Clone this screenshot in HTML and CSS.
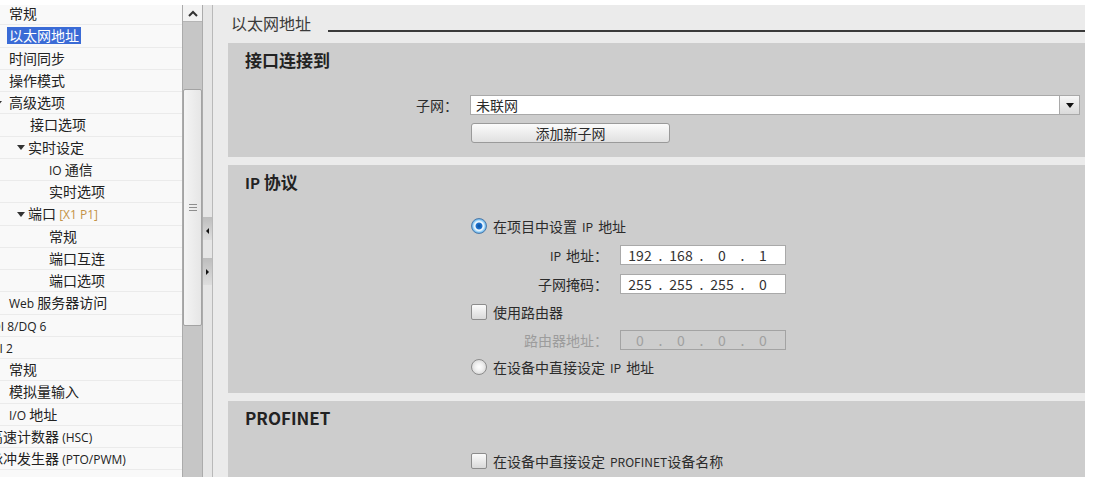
FILE: index.html
```html
<!DOCTYPE html>
<html>
    <head>
        <meta charset="utf-8">
        <link rel="stylesheet" href="styles.css">
    </head>
    <body>

        <div class="app">

            <div class="tree">
                <ul>
                    <li class="l0">常规</li>
                    <li class="l0"><span class="sel">以太网地址</span></li>
                    <li class="l0">时间同步</li>
                    <li class="l0">操作模式</li>
                    <li class="l0"><i class="toggle cut"></i>高级选项</li>
                    <li class="l1">接口选项</li>
                    <li class="l1t"><i class="toggle"></i>实时设定</li>
                    <li class="l2"><span class="lat">IO</span> 通信</li>
                    <li class="l2">实时选项</li>
                    <li class="l1t"><i class="toggle"></i>端口 <span class="lat port">[X1 P1]</span></li>
                    <li class="l2">常规</li>
                    <li class="l2">端口互连</li>
                    <li class="l2">端口选项</li>
                    <li class="l0"><span class="lat">Web</span> 服务器访问</li>
                    <li class="lm latin"><span class="lat">DI 8/DQ 6</span></li>
                    <li class="lm latin"><span class="lat">AI 2</span></li>
                    <li class="l0">常规</li>
                    <li class="l0">模拟量输入</li>
                    <li class="l0"><span class="lat">I/O</span> 地址</li>
                    <li class="lm">高速计数器 <span class="lat">(HSC)</span></li>
                    <li class="lm">脉冲发生器 <span class="lat">(PTO/PWM)</span></li>
                </ul>
            </div>

            <div class="vscroll">
                <div class="up">
                    <svg width="10" height="7" viewBox="0 0 10 7"><polyline points="1,6 5,2 9,6" fill="none" stroke="#333" stroke-width="2"/></svg>
                </div>
                <div class="track first"></div>
                <div class="thumb"><span class="grip"></span></div>
                <div class="track"></div>
            </div>

            <div class="splitter">
                <div class="nub"><i class="arrow left"></i></div>
                <div class="nub second"><i class="arrow right"></i></div>
            </div>

            <div class="main">

                <div class="title"><span>以太网地址</span><i class="rule"></i></div>

                <div class="section iface">
                    <h2>接口连接到</h2>
                    <div class="row subnet">
                        <label class="label">子网：</label>
                        <div class="combo"><span class="value">未联网</span><span class="drop"></span></div>
                    </div>
                    <div class="row"><button class="btn">添加新子网</button></div>
                </div>

                <div class="section ip">
                    <h2><span class="lat">IP</span> 协议</h2>
                    <div class="row choice first"><i class="radio on"></i>在项目中设置<span class="lat">IP</span>地址</div>
                    <div class="row field">
                        <label class="label"><span class="lat">IP</span>地址：</label>
                        <div class="addr"><span class="o">192</span><span class="d">.</span><span class="o">168</span><span class="d">.</span><span class="o">0</span><span class="d">.</span><span class="o">1</span></div>
                    </div>
                    <div class="row field">
                        <label class="label">子网掩码：</label>
                        <div class="addr"><span class="o">255</span><span class="d">.</span><span class="o">255</span><span class="d">.</span><span class="o">255</span><span class="d">.</span><span class="o">0</span></div>
                    </div>
                    <div class="row choice"><i class="check"></i>使用路由器</div>
                    <div class="row field">
                        <label class="label off">路由器地址：</label>
                        <div class="addr off"><span class="o">0</span><span class="d">.</span><span class="o">0</span><span class="d">.</span><span class="o">0</span><span class="d">.</span><span class="o">0</span></div>
                    </div>
                    <div class="row choice last"><i class="radio"></i>在设备中直接设定<span class="lat">IP</span>地址</div>
                </div>

                <div class="section profinet">
                    <h2>PROFINET</h2>
                    <div class="row choice first"><i class="check"></i>在设备中直接设定<span class="lat pre">PROFINET</span>设备名称</div>
                </div>

            </div>
        </div>

    </body>
</html>
```

FILE: styles.css
```css
* { margin: 0; padding: 0; box-sizing: border-box; }
body { background: #ffffff; font-family: "Noto Sans CJK SC", "Noto Sans", sans-serif; color: #2b2b2b; }

.app { display: flex; margin-top: 5px; width: 1085px; height: 472px; overflow: hidden; }

/* tree */
.tree { width: 182px; flex: none; overflow: hidden; background: #f9f9f9; }
.tree ul { list-style: none; margin-top: -2px; }
.tree li { height: 22.25px; line-height: 21px; font-size: 14px; border-bottom: 1px solid #ebebeb; white-space: nowrap; color: #222222; }
.tree .l0 { padding-left: 9px; }
.tree .l1 { padding-left: 30px; }
.tree .l1t { padding-left: 17px; }
.tree .l2 { padding-left: 49px; }
.tree .lm { text-indent: -11px; }
.tree .lm.latin { text-indent: -8px; }
.tree .lat { font-size: 12px; font-family: "Open Sans", sans-serif; }
.tree .port { color: #c49347; }
.tree .sel { display: inline-block; background: #3a6bd6; color: #ffffff; line-height: 17px; padding: 0 2px; margin-left: -2px; }
.tree .toggle { display: inline-block; vertical-align: middle; margin: -2px 3px 0 0; border-left: 4px solid transparent; border-right: 4px solid transparent; border-top: 5px solid #333; }
.tree .toggle.cut { margin-left: -15px; margin-right: 7px; }

/* scrollbar */
.vscroll { width: 21px; flex: none; display: flex; flex-direction: column; border-left: 1px solid #ababab; border-right: 1px solid #ababab; background: #c6c6c6; }
.vscroll .up { height: 17px; background: #f3f3f3; display: flex; align-items: center; justify-content: center; border-bottom: 1px solid #b5b5b5; }
.vscroll .track.first { height: 67px; }
.vscroll .thumb { height: 237px; background: linear-gradient(90deg, #f4f4f4, #e6e6e6); border: 1px solid #a3a3a3; border-radius: 2px; display: flex; align-items: center; justify-content: center; }
.vscroll .grip { width: 8px; height: 7px; border-top: 1px solid #8e8e8e; border-bottom: 1px solid #8e8e8e; background: linear-gradient(#8e8e8e, #8e8e8e) center / 8px 1px no-repeat; }

/* splitter */
.splitter { width: 10px; flex: none; background: #e6e6e6; border-right: 1px solid #b9b9b9; display: flex; flex-direction: column; padding-top: 212px; }
.splitter .nub { height: 23px; background: linear-gradient(#bdbdbd, #dedede); display: flex; align-items: flex-end; justify-content: center; padding-bottom: 6px; }
.splitter .nub.second { height: 27px; margin-top: 18px; align-items: center; padding-bottom: 0; }
.splitter .arrow { border-top: 3px solid transparent; border-bottom: 3px solid transparent; }
.splitter .arrow.left { border-right: 3px solid #111; }
.splitter .arrow.right { border-left: 3px solid #111; }

/* main panel */
.main { flex: 1; background: #ebebeb; padding-left: 15px; }
.title { display: flex; align-items: flex-end; height: 38px; padding: 0 0 10px 3px; }
.title span { font-size: 16px; line-height: 20px; color: #3a3a3a; }
.title .rule { flex: 1; border-bottom: 2px solid #3a3a3a; margin: 0 0 1px 17px; }

.section { background: #cdcdcd; margin-bottom: 8px; padding: 8px 0 14px 0; }
.section h2 { margin-left: 17px; font-size: 17px; line-height: 18px; font-weight: bold; color: #222222; }
.section h2 .lat { font-size: 15px; }
.section.ip { padding-bottom: 17px; }

.row { display: flex; align-items: center; margin-left: 242px; height: 20px; font-size: 14px; color: #2b2b2b; }
.row .lat { font-size: 12px; margin: 0 5px; }
.row .lat.pre { margin: 0 0 0 5px; }
.label .lat { margin-left: 0; }
.row.subnet { margin: 26px 0 0 0; }
.row.field { margin-top: 9px; }
.row.choice { height: 18px; margin-top: 9px; }
.row.choice.first { margin-top: 25px; }
.ip .row.field:nth-of-type(2) { margin-top: 10px; }
.row.choice.last { margin-top: 8px; }
.iface .row:last-child { margin-top: 8px; }

.label { width: 150px; flex: none; padding-right: 12px; text-align: right; }
.subnet .label { width: 242px; }
.label.off { color: #9c9c9c; }

.combo { display: flex; width: 610px; height: 20px; background: #ffffff; border: 1px solid #a9a9a9; }
.combo .value { flex: 1; padding-left: 5px; line-height: 18px; }
.combo .drop { width: 20px; border-left: 1px solid #a9a9a9; background: linear-gradient(#f7f7f7, #dadada); display: flex; align-items: center; justify-content: center; }
.combo .drop::after { content: ""; border-left: 4px solid transparent; border-right: 4px solid transparent; border-top: 5px solid #111111; }

.btn { width: 199px; height: 20px; margin-left: 1px; border: 1px solid #9a9a9a; border-radius: 3px; background: linear-gradient(#fbfbfb, #e0e0e0); font-family: inherit; font-size: 14px; line-height: 18px; color: #2b2b2b; }

.addr { display: flex; width: 166px; height: 20px; background: #ffffff; border: 1px solid #a9a9a9; padding-left: 4px; line-height: 18px; color: #333333; }
.addr .o { width: 30px; text-align: center; }
.addr .d { width: 11px; text-align: center; }
.addr.off { background: transparent; border-color: #a3a3a3; color: #a0a0a0; }

.radio { width: 16px; height: 16px; margin: 0 6px 0 1px; border-radius: 50%; border: 1px solid #8c8c8c; background: radial-gradient(circle, #ffffff 0, #f0f0f0 4px, #d6d6d6 8px); }
.radio.on { border-color: #4f7aa8; background: radial-gradient(circle, #0b4e9e 0, #1f74cf 3px, #ffffff 4px, #cfeafc 5px, #5fb0ea 7px); }
.check { width: 16px; height: 16px; margin: 0 6px 0 1px; border: 1px solid #8c8c8c; border-radius: 2px; background: linear-gradient(#fbfbfb, #d9d9d9); }
```
